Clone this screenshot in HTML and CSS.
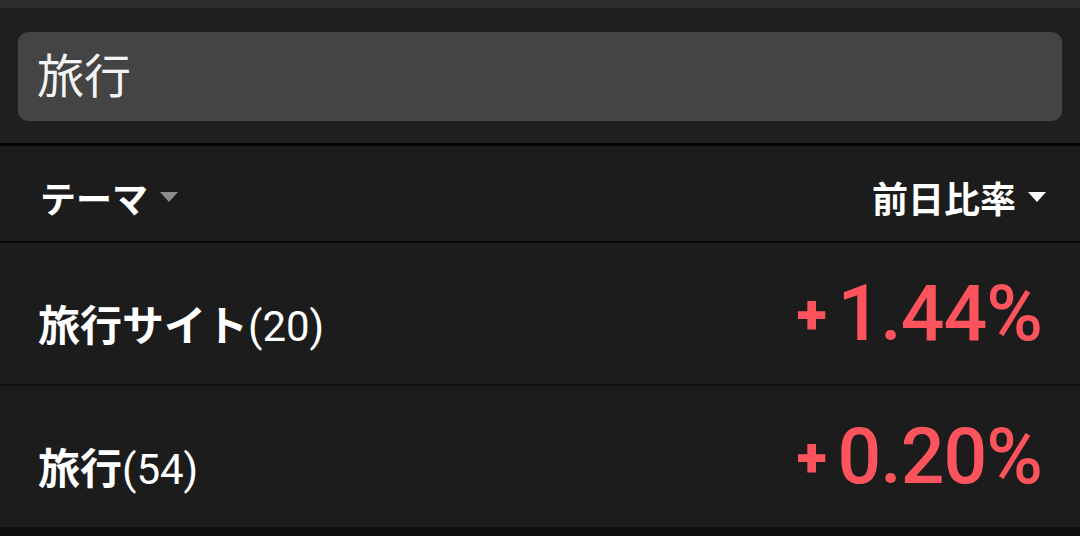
FILE: index.html
```html
<!DOCTYPE html>
<html lang="ja">
<head>
    <meta charset="utf-8">
    <title>テーマ検索</title>
    <link rel="stylesheet" href="styles.css">
</head>
<body>
<div class="statusBar"></div>

<div class="searchArea">
    <div class="searchBox">旅行</div>
</div>

<div class="listHead">
    <div class="sortKey sortOff">テーマ<span class="caret"></span></div>
    <div class="sortKey sortOn">前日比率<span class="caret"></span></div>
</div>

<div class="themeRow">
    <div class="themeName">旅行サイト<span class="count">(20)</span></div>
    <div class="rate up"><span class="sign">+</span>1.44%</div>
</div>
<div class="themeRow">
    <div class="themeName">旅行<span class="count">(54)</span></div>
    <div class="rate up"><span class="sign">+</span>0.20%</div>
</div>
</body>
</html>
```

FILE: styles.css
```css
html, body {
    margin: 0;
    height: 100%;
}

body {
    background: #0e0e0e;
    color: #ffffff;
    font-family: "Noto Sans CJK JP", "Noto Sans", sans-serif;
    overflow: hidden;
}

.statusBar {
    height: 8px;
    background: #2c2c2c;
}

.searchArea {
    background: #1f1f1f;
    padding: 24px 18px 22px;
    border-bottom: 3px solid #050505;
}

.searchBox {
    height: 89px;
    box-sizing: border-box;
    background: #444444;
    border-radius: 10px;
    padding: 0 0 8px 19px;
    display: flex;
    align-items: center;
    font-size: 47px;
    color: #f4f4f4;
}

.listHead {
    height: 95px;
    background: #1c1c1c;
    border-bottom: 2px solid #0a0a0a;
    display: flex;
    align-items: center;
    justify-content: space-between;
    padding: 0 34px 0 40px;
}

.sortKey {
    display: flex;
    align-items: center;
    font-size: 36px;
    font-weight: 700;
    padding-top: 6px;
}

.caret {
    width: 0;
    height: 0;
    border-left: 9px solid transparent;
    border-right: 9px solid transparent;
    border-top: 10px solid;
    margin-left: 12px;
}

.sortOff .caret {
    color: #8c8c8c;
}

.sortOn .caret {
    color: #ffffff;
}

.themeRow {
    height: 141px;
    background: #1c1c1c;
    border-bottom: 2px solid #0f0f0f;
    display: flex;
    align-items: center;
    justify-content: space-between;
    padding: 0 38px 0 38px;
}

.themeName {
    font-size: 42px;
    font-weight: 700;
    padding-top: 18px;
}

.count {
    font-family: Roboto, "Liberation Sans", sans-serif;
    font-weight: 400;
}

.rate {
    font-family: Roboto, "Liberation Sans", sans-serif;
    font-weight: 500;
    font-size: 77px;
    letter-spacing: -1px;
}

.sign {
    font-size: 56px;
    font-weight: 900;
    margin-right: 12px;
    vertical-align: 6px;
}

.up {
    color: #fd535d;
}
```
